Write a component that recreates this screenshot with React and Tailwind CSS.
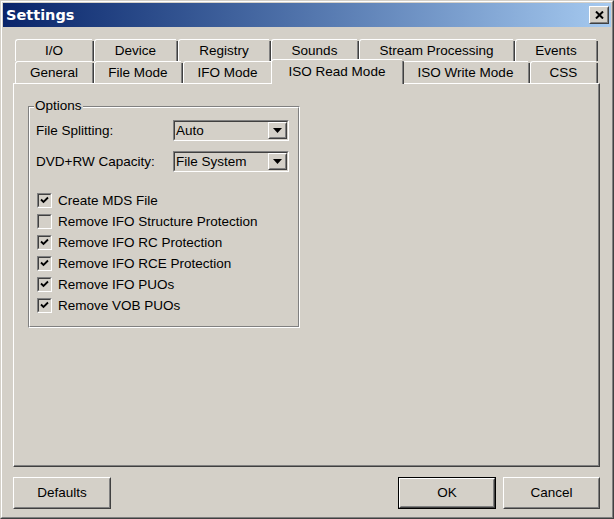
import React, { useState } from 'react';

const row1 = [
    { label: 'I/O', w: 'w-[79px]' },
    { label: 'Device', w: 'w-[84px]' },
    { label: 'Registry', w: 'w-[93px]' },
    { label: 'Sounds', w: 'w-[88px]' },
    { label: 'Stream Processing', w: 'w-[156px]' },
    { label: 'Events', w: 'w-[83px]' },
];

const row2 = [
    { label: 'General', w: 'w-[79px]' },
    { label: 'File Mode', w: 'w-[89px]' },
    { label: 'IFO Mode', w: 'w-[90px]' },
    { label: 'ISO Read Mode', w: 'w-[133px]', active: true },
    { label: 'ISO Write Mode', w: 'w-[128px]' },
    { label: 'CSS', w: 'w-[68px]' },
];

const options = [
    { label: 'Create MDS File', checked: true },
    { label: 'Remove IFO Structure Protection', checked: false },
    { label: 'Remove IFO RC Protection', checked: true },
    { label: 'Remove IFO RCE Protection', checked: true },
    { label: 'Remove IFO PUOs', checked: true },
    { label: 'Remove VOB PUOs', checked: true },
];

// raised 3d frame used by buttons
const Raised = ({ className = '', children }) => (
    <div className={`border border-t-white border-l-white border-r-[#404040] border-b-[#404040] bg-[#d4d0c8] ${className}`}>
        <div className="w-full h-full border border-t-[#d4d0c8] border-l-[#d4d0c8] border-r-[#808080] border-b-[#808080] flex items-center justify-center">
            {children}
        </div>
    </div>
);

const Tab = ({ tab }) => {
    if (tab.active) {
        return (
            <div className={`${tab.w} h-[25px] -mb-[1px] -mx-[2px] relative z-10 flex shrink-0`}>
                <div className="flex-1 bg-[#d4d0c8] border-t border-l border-white rounded-tl-[3px] flex justify-center pt-[2px]">
                    {tab.label}
                </div>
                <div className="w-[2px] flex mt-[2px]">
                    <div className="w-[1px] bg-[#808080]"></div>
                    <div className="w-[1px] bg-[#404040] rounded-tr-[2px]"></div>
                </div>
            </div>
        );
    }
    return (
        <div className={`${tab.w} h-[22px] flex shrink-0`}>
            <div className="flex-1 bg-[#d4d0c8] border-t border-l border-white rounded-tl-[3px] flex justify-center pt-[1px]">
                {tab.label}
            </div>
            <div className="w-[2px] flex mt-[2px]">
                <div className="w-[1px] bg-[#808080]"></div>
                <div className="w-[1px] bg-[#404040]"></div>
            </div>
        </div>
    );
};

const Combo = ({ value }) => (
    <div className="w-[116px] h-[21px] border border-t-[#808080] border-l-[#808080] border-r-white border-b-white">
        <div className="w-full h-full border border-t-[#404040] border-l-[#404040] border-r-[#d4d0c8] border-b-[#d4d0c8] flex items-center">
            <span className="flex-1 pl-[1px] leading-none">{value}</span>
            <Raised className="w-[19px] h-[17px]">
                <svg width="9" height="5" viewBox="0 0 9 5">
                    <path d="M0 0h9L4.5 5z" fill="#000" />
                </svg>
            </Raised>
        </div>
    </div>
);

const Checkbox = ({ checked, onToggle }) => (
    <div
        onClick={onToggle}
        className="w-[15px] h-[15px] border border-t-[#808080] border-l-[#808080] border-r-white border-b-white shrink-0"
    >
        <div className="w-full h-full border border-t-[#404040] border-l-[#404040] border-r-[#d4d0c8] border-b-[#d4d0c8] flex items-center justify-center">
            {checked && (
                <svg width="9" height="9" viewBox="0 0 9 9">
                    <path d="M1 3.5l2.5 2.5L8 1.5" stroke="#000" strokeWidth="1.8" fill="none" />
                </svg>
            )}
        </div>
    </div>
);

export default function App() {
    const [checks, setChecks] = useState(options.map((o) => o.checked));

    const toggle = (i) => {
        setChecks(checks.map((c, j) => (j === i ? !c : c)));
    };

    return (
        <div className="w-[614px] h-[519px] bg-[#d4d0c8] text-black text-[13.5px] font-['Liberation_Sans',Arial,sans-serif] border border-t-[#d4d0c8] border-l-[#d4d0c8] border-r-[#404040] border-b-[#404040]">
            <div className="w-full h-full border border-t-white border-l-white border-r-[#808080] border-b-[#808080] p-[1px] flex flex-col">
                {/* title bar */}
                <div className="h-[24px] bg-gradient-to-r from-[#0a246a] to-[#a6caf0] flex items-center justify-between pl-[3px] pr-[2px]">
                    <span className="text-white font-bold text-[14.5px] font-['DejaVu_Sans',sans-serif] leading-none">
                        Settings
                    </span>
                    <Raised className="w-[20px] h-[18px]">
                        <svg width="9" height="8" viewBox="0 0 9 8">
                            <path d="M1 0.5l7 7M8 0.5l-7 7" stroke="#000" strokeWidth="2" />
                        </svg>
                    </Raised>
                </div>

                <div className="flex flex-col pl-[10px] pt-[12px]">
                    <div className="flex ml-[2px]">
                        {row1.map((t) => (
                            <Tab key={t.label} tab={t} />
                        ))}
                    </div>
                    <div className="flex items-end h-[22px] ml-[2px]">
                        {row2.map((t) => (
                            <Tab key={t.label} tab={t} />
                        ))}
                    </div>

                    {/* page */}
                    <div className="w-[587px] h-[384px] border-t border-l border-white border-r border-b border-r-[#404040] border-b-[#404040]">
                        <div className="w-full h-full border-r border-b border-r-[#808080] border-b-[#808080] pl-[14px] pt-[22px]">
                            <div className="relative w-[272px] h-[222px] border border-t-[#808080] border-l-[#808080] border-r-white border-b-white">
                                <span className="absolute -top-[8px] left-[5px] px-[1px] bg-[#d4d0c8] leading-none">Options</span>
                                <div className="w-full h-full border border-t-white border-l-white border-r-[#808080] border-b-[#808080] pl-[6px] pt-[12px] flex flex-col">
                                    <div className="flex items-center">
                                        <span className="w-[137px] leading-none">File Splitting:</span>
                                        <Combo value="Auto" />
                                    </div>
                                    <div className="flex items-center mt-[10px]">
                                        <span className="w-[137px] leading-none">DVD+RW Capacity:</span>
                                        <Combo value="File System" />
                                    </div>
                                    <div className="flex flex-col mt-[18px]">
                                        {options.map((o, i) => (
                                            <div key={o.label} className="h-[21px] flex items-center gap-[6px] pl-[1px]">
                                                <Checkbox checked={checks[i]} onToggle={() => toggle(i)} />
                                                <span className="leading-none">{o.label}</span>
                                            </div>
                                        ))}
                                    </div>
                                </div>
                            </div>
                        </div>
                    </div>

                    {/* buttons */}
                    <div className="flex mt-[10px] w-[587px]">
                        <Raised className="w-[98px] h-[32px]">Defaults</Raised>
                        <div className="flex-1"></div>
                        <div className="w-[98px] h-[32px] border border-black">
                            <Raised className="w-full h-full">OK</Raised>
                        </div>
                        <Raised className="w-[97px] h-[32px] ml-[7px]">Cancel</Raised>
                    </div>
                </div>
            </div>
        </div>
    );
}
